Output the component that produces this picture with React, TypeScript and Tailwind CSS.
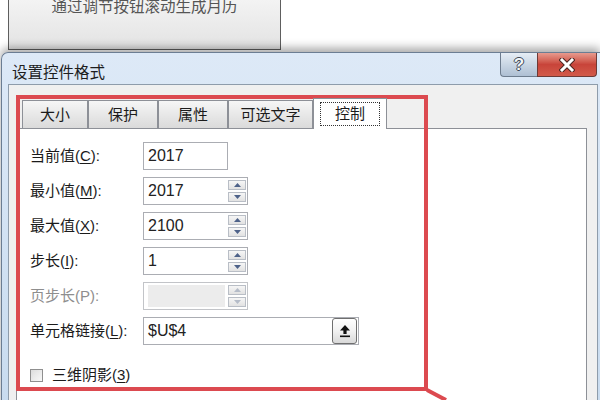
import React from 'react';

const FONT = "font-['Liberation_Sans','Noto_Sans_CJK_SC',sans-serif]";

function Spinner({ disabled }: { disabled?: boolean }) {
  const tri = disabled ? 'text-[#b5bcc8]' : 'text-[#4e6289]';
  return (
    <div className="flex flex-col gap-[2px] py-[2px] pr-[1px] h-full">
      {['up', 'down'].map(dir => (
        <div
          key={dir}
          className="w-[18px] flex-1 flex items-center justify-center border border-[#b9bec6] bg-gradient-to-b from-[#f6f6f6] to-[#e2e2e2]"
        >
          <svg width="7" height="4" viewBox="0 0 7 4" className={tri}>
            {dir === 'up'
              ? <path d="M0 4 L3.5 0 L7 4 Z" fill="currentColor" />
              : <path d="M0 0 L3.5 4 L7 0 Z" fill="currentColor" />}
          </svg>
        </div>
      ))}
    </div>
  );
}

function Label({ text, hot, rest = '):', disabled }: { text: string; hot?: string; rest?: string; disabled?: boolean }) {
  return (
    <div className={`w-[113px] shrink-0 text-[15px] ${disabled ? 'text-[#8e8e8e]' : 'text-[#1b1b1b]'}`}>
      {text}(
      {hot ? <span className="underline underline-offset-2">{hot}</span> : null}
      {rest}
    </div>
  );
}

export default function App() {
  const tabs = [
    { name: '大小', w: 'w-[66px]' },
    { name: '保护', w: 'w-[70px]' },
    { name: '属性', w: 'w-[70px]' },
    { name: '可选文字', w: 'w-[85px]' },
  ];

  return (
    <div className={`relative w-[600px] h-[400px] overflow-hidden bg-white ${FONT}`}>
      {/* button on the sheet behind the dialog */}
      <div className="ml-[8px] w-[273px] h-[50px] border-x border-b border-[#5e5e5e] bg-gradient-to-b from-[#f3f3f3] to-[#e3e3e3] text-center text-[15.5px] leading-[14px] text-[#555]">
        通过调节按钮滚动生成月历
      </div>

      {/* dialog */}
      <div className="mt-[2px] ml-[1px] h-[360px] rounded-tl-[7px] border-l border-t border-[#6b7d93] bg-gradient-to-b from-[#dde9f7] to-[#c8dbef] shadow-[0_-4px_10px_rgba(0,0,0,0.35)] flex flex-col">
        <div className="h-[36px] flex justify-between">
          <div className="pl-[10px] pt-[8px] text-[15.5px] text-[#1d1d1d]">设置控件格式</div>
          <div className="flex mr-[3px] h-[24px]">
            <div className="w-[37px] rounded-bl-[4px] border-l border-b border-[#6d7c8e] bg-gradient-to-b from-[#e6edf5] via-[#c9d6e4] to-[#aebfd3] flex items-center justify-center text-[#f4f6f8] font-bold text-[17px] [text-shadow:1px_0_0_#3b4654,-1px_0_0_#3b4654,0_1px_0_#3b4654,0_-1px_0_#3b4654]">
              ?
            </div>
            <div className="w-[60px] rounded-br-[4px] border-x border-b border-[#6d3a36] bg-gradient-to-b from-[#e79a8e] via-[#c8443a] to-[#d25a4a] flex items-center justify-center">
              <svg width="16" height="14" viewBox="0 0 16 14">
                <path d="M3 2 L13 12 M13 2 L3 12" stroke="#4a2520" strokeWidth="5" strokeLinecap="square" />
                <path d="M3 2 L13 12 M13 2 L3 12" stroke="#ffffff" strokeWidth="3" strokeLinecap="square" />
              </svg>
            </div>
          </div>
        </div>

        {/* body */}
        <div className="ml-[6px] w-[590px] flex-1 border border-[#8e9cab] bg-[#f0f0f0] pt-[12px] pl-[7px]">
          <div className="flex items-end h-[31px] pl-[6px] relative z-10">
            {tabs.map(t => (
              <div
                key={t.name}
                className={`${t.w} h-[28px] border border-[#8d9097] border-b-0 bg-gradient-to-b from-[#f6f6f6] to-[#dadada] flex items-center justify-center text-[15px] text-[#1b1b1b]`}
              >
                {t.name}
              </div>
            ))}
            <div className="w-[74px] h-[31px] -mb-px border border-[#8d9097] border-b-0 bg-white flex items-center justify-center">
              <div className="w-[60px] h-[24px] border border-dotted border-[#333] flex items-center justify-center text-[15px] text-[#1b1b1b]">
                控制
              </div>
            </div>
          </div>

          <div className="w-[571px] h-[300px] border border-[#8d9097] bg-white pt-[13px] pl-[13px]">
            <div className="flex flex-col gap-[7px]">
              <div className="flex items-center h-[28px]">
                <Label text="当前值" hot="C" />
                <div className="w-[85px] h-full border border-[#abadb3] flex items-center pl-[4px] text-[16px] text-[#222]">2017</div>
              </div>
              <div className="flex items-center h-[28px]">
                <Label text="最小值" hot="M" />
                <div className="w-[105px] h-full border border-[#abadb3] flex items-center justify-between pl-[4px] text-[16px] text-[#222]">
                  2017
                  <Spinner />
                </div>
              </div>
              <div className="flex items-center h-[28px]">
                <Label text="最大值" hot="X" />
                <div className="w-[105px] h-full border border-[#abadb3] flex items-center justify-between pl-[4px] text-[16px] text-[#222]">
                  2100
                  <Spinner />
                </div>
              </div>
              <div className="flex items-center h-[28px]">
                <Label text="步长" hot="I" />
                <div className="w-[105px] h-full border border-[#abadb3] flex items-center justify-between pl-[4px] text-[16px] text-[#222]">
                  1
                  <Spinner />
                </div>
              </div>
              <div className="flex items-center h-[28px]">
                <Label text="页步长" rest="P):" disabled />
                <div className="w-[105px] h-full border border-[#c2c4c8] flex items-center justify-between pl-[4px]">
                  <div className="w-[77px] h-[22px] bg-[#ececec]" />
                  <Spinner disabled />
                </div>
              </div>
              <div className="flex items-center h-[28px]">
                <Label text="单元格链接" hot="L" />
                <div className="w-[216px] h-full border border-[#abadb3] flex items-center justify-between pl-[4px] text-[16px] text-[#222]">
                  $U$4
                  <div className="w-[25px] h-[26px] mr-px rounded-[3px] border border-[#6f6f6f] bg-gradient-to-b from-[#ffffff] via-[#f1f1f1] to-[#d9d9d9] flex items-center justify-center">
                    <svg width="12" height="14" viewBox="0 0 12 14">
                      <path d="M6 1 L11 6.5 L7.6 6.5 L7.6 10 L4.4 10 L4.4 6.5 L1 6.5 Z" fill="#111" />
                      <rect x="1" y="11.5" width="10" height="1.6" fill="#111" />
                    </svg>
                  </div>
                </div>
              </div>
            </div>

            <div className="mt-[19px] flex items-center gap-[9px]">
              <div className="w-[13px] h-[13px] border border-[#8f8f8f] bg-gradient-to-br from-[#dcdcdc] to-[#f8f8f8] p-[2px]">
                <div className="w-full h-full bg-gradient-to-br from-[#e2e2e2] to-[#f4f4f4]" />
              </div>
              <span className="text-[15px] text-[#1b1b1b]">
                三维阴影(<span className="underline underline-offset-2">3</span>)
              </span>
            </div>
          </div>
        </div>
      </div>

      {/* red annotation frame */}
      <div className="absolute left-[16px] top-[95px] w-[412px] h-[296px] border-[4px] border-[#dc4a50] pointer-events-none" />
      <svg className="absolute left-[424px] top-[387px]" width="24" height="14" viewBox="0 0 24 14">
        <path d="M3 3 L22 13" stroke="#dc4a50" strokeWidth="4" />
      </svg>
    </div>
  );
}
